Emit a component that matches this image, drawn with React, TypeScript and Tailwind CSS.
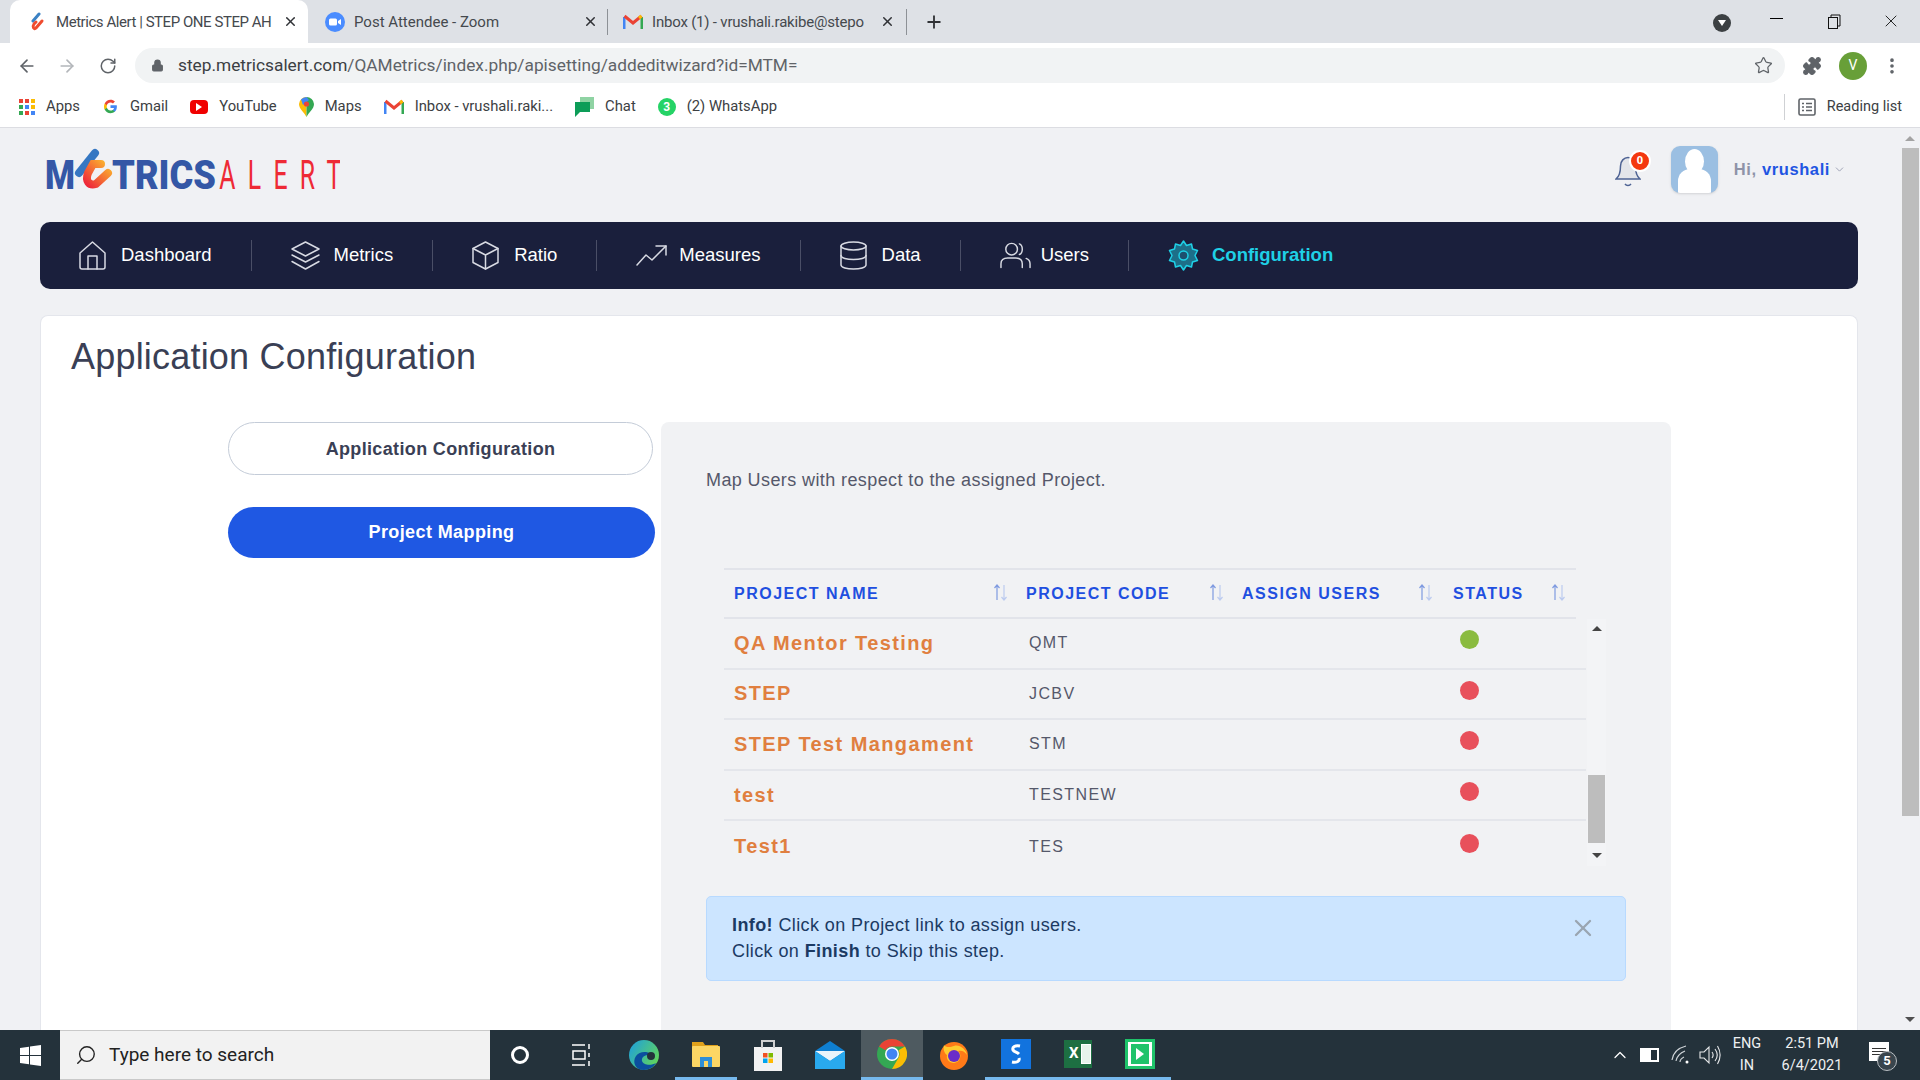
import type { ReactNode } from "react";
import {
    ArrowLeft,
    ArrowRight,
    ChevronDown,
    ChevronUp,
    Lock,
    MoreVertical,
    Plus,
    Puzzle,
    RotateCw,
    Search,
    Star,
    X,
} from "lucide-react";

const chromeFont = "font-['Roboto',sans-serif]";

function TabLogo() {
    return (
        <svg width="20" height="20" viewBox="0 0 20 20" fill="none" strokeLinecap="round">
            <path d="M6 9 L12 2" stroke="#3b82c4" strokeWidth="3" />
            <path d="M15 9 L9 16 C7 18 5 15 7 12 L9 10" stroke="#ef4b2f" strokeWidth="3" />
        </svg>
    );
}

function ZoomLogo() {
    return (
        <svg width="20" height="20" viewBox="0 0 20 20">
            <circle cx="10" cy="10" r="10" fill="#4a8cff" />
            <rect x="4" y="6.5" width="8" height="7" rx="1.5" fill="#fff" />
            <path d="M13 9 L16 7 V13 L13 11 Z" fill="#fff" />
        </svg>
    );
}

function GmailLogo() {
    return (
        <svg width="20" height="16" viewBox="0 0 20 16" fill="none">
            <path d="M1 15 V3" stroke="#4285f4" strokeWidth="3" />
            <path d="M19 15 V3" stroke="#34a853" strokeWidth="3" />
            <path d="M1.5 2 L10 9 L18.5 2" stroke="#ea4335" strokeWidth="3" />
            <path d="M18.5 2 L16 4" stroke="#fbbc04" strokeWidth="3" />
        </svg>
    );
}

function BrowserTab({
    icon,
    title,
    active,
    box,
    titleClass,
    divider,
}: {
    icon: ReactNode;
    title: string;
    active?: boolean;
    box: string;
    titleClass?: string;
    divider?: boolean;
}) {
    return (
        <div className={`relative flex h-[43px] items-center ${box} ${active ? "rounded-t-[10px] bg-white" : ""}`}>
            <div className="mr-[9px] flex w-[20px] shrink-0 justify-center">{icon}</div>
            <div className={`min-w-0 flex-1 whitespace-nowrap pt-[1px] text-[15px] text-[#45494e] ${titleClass ?? ""}`}>
                {title}
            </div>
            <X size={15} strokeWidth={2.4} className="ml-[8px] shrink-0 text-[#303236]" />
            {divider && <div className="absolute right-0 top-[9px] h-[26px] w-px bg-[#8d9196]" />}
        </div>
    );
}

function Bookmark({ icon, label }: { icon: ReactNode; label: string }) {
    return (
        <div className="mr-[22px] flex items-center gap-[11px] text-[14.8px] text-[#3c4043]">
            {icon}
            <span>{label}</span>
        </div>
    );
}

function BrowserChrome() {
    return (
        <div className={`shrink-0 ${chromeFont}`}>
            <div className="flex h-[43px] items-end bg-[#dee1e6] pl-[10px]">
                <BrowserTab
                    active
                    icon={<TabLogo />}
                    title="Metrics Alert | STEP ONE STEP AH"
                    box="w-[298px] pl-[17px] pr-[10px]"
                    titleClass="tracking-[-0.45px]"
                />
                <BrowserTab icon={<ZoomLogo />} title="Post Attendee - Zoom" box="w-[300px] pl-[17px] pr-[10px]" divider />
                <BrowserTab
                    icon={<GmailLogo />}
                    title="Inbox (1) - vrushali.rakibe@stepo"
                    box="w-[299px] pl-[15px] pr-[12px]"
                    titleClass="tracking-[-0.2px]"
                    divider
                />
                <Plus size={20} strokeWidth={2.2} className="mb-[11px] ml-[17px] text-[#303236]" />
                <div className="flex-1" />
                <div className="mb-[11px] mr-[39px] flex h-[18px] w-[18px] items-center justify-center rounded-full bg-[#3c4043]">
                    <div className="h-0 w-0 border-x-[4px] border-t-[6px] border-x-transparent border-t-white" />
                </div>
                <div className="mb-[24px] mr-[44px] h-px w-[13px] bg-black" />
                <svg width="15" height="15" viewBox="0 0 15 15" fill="none" stroke="#111" className="mb-[14px] mr-[39px]">
                    <rect x="1.5" y="3.5" width="9" height="11" />
                    <path d="M4 3 V1 H13 V12 H11" />
                </svg>
                <X size={20} strokeWidth={1} className="mb-[12px] mr-[19px] text-black" />
            </div>
            <div className="flex h-[43px] items-center bg-white pt-[2px]">
                <ArrowLeft size={20} strokeWidth={2} className="ml-[17px] text-[#5f6368]" />
                <ArrowRight size={20} strokeWidth={2} className="ml-[20px] text-[#b3b6ba]" />
                <RotateCw size={18} strokeWidth={2} className="ml-[22px] text-[#5f6368]" />
                <div className="ml-[18px] flex h-[35px] w-[1650px] items-center rounded-full bg-[#f1f3f4] pl-[16px] pr-[12px] text-[17.3px] text-[#3c4043]">
                    <Lock size={13} fill="#5f6368" strokeWidth={2} className="mr-[14px] text-[#5f6368]" />
                    <span>
                        step.metricsalert.com<span className="text-[#5f6368]">/QAMetrics/index.php/apisetting/addeditwizard?id=MTM=</span>
                    </span>
                    <Star size={19} strokeWidth={1.6} className="ml-auto text-[#5f6368]" />
                </div>
                <Puzzle size={20} fill="#5f6368" strokeWidth={1.5} className="ml-[17px] text-[#5f6368]" />
                <div className="ml-[17px] flex h-[28px] w-[28px] items-center justify-center rounded-full bg-[#689f38] text-[14px] text-white">
                    V
                </div>
                <MoreVertical size={20} strokeWidth={2.4} className="ml-[15px] text-[#5f6368]" />
            </div>
            <div className="flex h-[42px] items-center border-b border-[#dcdde2] bg-white pl-[19px] pr-[18px]">
                <Bookmark
                    label="Apps"
                    icon={
                        <div className="grid h-[16px] w-[16px] grid-cols-3 gap-[2px]">
                            {["#ea4335", "#ea4335", "#fbbc04", "#34a853", "#4285f4", "#fbbc04", "#34a853", "#ea4335", "#4285f4"].map((c, i) => (
                                <div key={i} style={{ backgroundColor: c }} />
                            ))}
                        </div>
                    }
                />
                <Bookmark
                    label="Gmail"
                    icon={
                        <svg width="17" height="17" viewBox="0 0 24 24">
                            <path d="M21 12.2c0-.7-.1-1.3-.2-1.9H12v3.7h5c-.2 1.2-.9 2.2-1.9 2.9v2.4h3c1.8-1.6 2.9-4.1 2.9-7.1z" fill="#4285f4" />
                            <path d="M12 21.5c2.5 0 4.7-.8 6.1-2.3l-3-2.4c-.8.6-1.9.9-3.1.9-2.4 0-4.4-1.6-5.1-3.8H3.8v2.4c1.5 3 4.6 5.2 8.2 5.2z" fill="#34a853" />
                            <path d="M6.9 13.9c-.4-1.2-.4-2.6 0-3.8V7.7H3.8c-1.3 2.6-1.3 5.7 0 8.6z" fill="#fbbc04" />
                            <path d="M12 6.3c1.3 0 2.6.5 3.5 1.4l2.7-2.7C16.6 3.5 14.4 2.6 12 2.6c-3.6 0-6.7 2.1-8.2 5.1l3.1 2.4C7.6 7.9 9.6 6.3 12 6.3z" fill="#ea4335" />
                        </svg>
                    }
                />
                <Bookmark
                    label="YouTube"
                    icon={
                        <div className="flex h-[14px] w-[18px] items-center justify-center rounded-[4px] bg-[#f00000]">
                            <div className="h-0 w-0 border-y-[4px] border-l-[6px] border-y-transparent border-l-white" />
                        </div>
                    }
                />
                <Bookmark
                    label="Maps"
                    icon={
                        <svg width="15" height="20" viewBox="0 0 15 20">
                            <path d="M7.5 20 C5 15 0 12 0 7 A7.5 7.5 0 0 1 7.5 0 V20Z" fill="#fbbc04" />
                            <path d="M7.5 0 A7.5 7.5 0 0 1 15 7 C15 12 10 15 7.5 20 Z" fill="#34a853" />
                            <path d="M2 2.5 A7.5 7.5 0 0 1 7.5 0 L10 3 L4 8 Z" fill="#4285f4" />
                            <circle cx="7.5" cy="7" r="2.6" fill="#ea4335" />
                        </svg>
                    }
                />
                <Bookmark label="Inbox - vrushali.raki..." icon={<GmailLogo />} />
                <Bookmark
                    label="Chat"
                    icon={
                        <svg width="19" height="20" viewBox="0 0 19 20">
                            <path d="M5 0 H19 V12 H15 V5 H5 Z" fill="#8fd3a3" />
                            <path d="M0 5 H15 V15 H5 L0 20 Z" fill="#0d9d58" />
                        </svg>
                    }
                />
                <Bookmark
                    label="(2) WhatsApp"
                    icon={
                        <div className="flex h-[18px] w-[18px] items-center justify-center rounded-full bg-[#25d366] text-[12px] font-bold text-white">
                            3
                        </div>
                    }
                />
                <div className="ml-auto flex h-[26px] items-center gap-[11px] border-l border-[#cfd1d4] pl-[13px] text-[14.5px] text-[#3c4043]">
                    <svg width="18" height="18" viewBox="0 0 18 18" fill="none" stroke="#5f6368" strokeWidth="1.6">
                        <rect x="1" y="1" width="16" height="16" rx="1.5" />
                        <path d="M4 5.5 H6 M8 5.5 H14 M4 9 H6 M8 9 H14 M4 12.5 H6 M8 12.5 H14" />
                    </svg>
                    <span>Reading list</span>
                </div>
            </div>
        </div>
    );
}

function MetricsLogo() {
    return (
        <svg width="300" height="60" viewBox="0 0 300 60">
            <defs>
                <linearGradient id="hook" x1="0" y1="1" x2="1" y2="0">
                    <stop offset="0" stopColor="#ee2a3a" />
                    <stop offset="1" stopColor="#fbb32e" />
                </linearGradient>
            </defs>
            <text x="5" y="49" fontFamily="Roboto, sans-serif" fontWeight="900" fontSize="40" fill="#3457a6" textLength="30" lengthAdjust="spacingAndGlyphs">
                M
            </text>
            <path d="M39 33 L55 13" stroke="#3577c2" strokeWidth="8" strokeLinecap="round" />
            <path d="M61 24 L53 24 L48 33 C45 41 49 46 56 44 L68 33" fill="none" stroke="url(#hook)" strokeWidth="8" strokeLinecap="round" />
            <text x="72" y="49" fontFamily="Roboto, sans-serif" fontWeight="900" fontSize="40" fill="#3457a6" textLength="104" lengthAdjust="spacingAndGlyphs">
                TRICS
            </text>
            <g transform="scale(0.62 1)">
                <text x="289" y="49" fontFamily="Roboto, sans-serif" fontWeight="400" fontSize="40" fill="#ee2a35" textLength="197" lengthAdjust="spacing">
                    ALERT
                </text>
            </g>
        </svg>
    );
}

function Header() {
    return (
        <div className="flex h-[94px] shrink-0 items-center pb-[11px] pr-[12px]">
            <MetricsLogo />
            <div className="ml-auto flex items-center">
                <div className="relative h-[40px] w-[40px]">
                    <svg width="26" height="34" viewBox="0 0 26 34" fill="none" className="absolute left-[5px] top-[5px]">
                        <path d="M1 24 H25 C21 21 20.5 16 20.5 11 C20.5 6 17 2.5 13 2.5 C9 2.5 5.5 6 5.5 11 C5.5 16 5 21 1 24 Z" fill="#e3e5ea" stroke="#4e6394" strokeWidth="1.5" />
                        <path d="M10 29 C11.5 31 14.5 31 16 29" stroke="#4e6394" strokeWidth="1.5" />
                    </svg>
                    <div className="absolute left-[19px] top-0 flex h-[22px] w-[22px] items-center justify-center rounded-full border-2 border-white bg-[#f4380f] text-[11px] font-bold text-white">
                        0
                    </div>
                </div>
                <div className="relative ml-[21px] h-[47px] w-[47px] overflow-hidden rounded-[9px] bg-[#9bbfe2] shadow-sm">
                    <div className="absolute left-[14px] top-[3px] h-[25px] w-[19px] rounded-[50%] bg-white" />
                    <div className="absolute left-[7px] top-[23px] h-[24px] w-[33px] rounded-t-[12px] bg-white" />
                </div>
                <div className="ml-[16px] font-['Liberation_Sans',sans-serif] text-[16.5px] font-bold tracking-[0.6px] text-[#8e93a8]">
                    Hi, <span className="text-[#1f55e2]">vrushali</span>
                </div>
                <ChevronDown size={13} strokeWidth={1.5} className="ml-[3px] text-[#8e93a8]" />
            </div>
        </div>
    );
}

function NavIcon({ name }: { name: string }) {
    const props = {
        fill: "none",
        stroke: name === "Configuration" ? "#1fd0e6" : "#d8dae3",
        strokeWidth: 1.5,
        strokeLinecap: "round" as const,
        strokeLinejoin: "round" as const,
    };
    if (name === "Dashboard")
        return (
            <svg width="27" height="29" viewBox="0 0 27 29" {...props}>
                <path d="M1 12 L13.5 1 L26 12 V26 A2 2 0 0 1 24 28 H3 A2 2 0 0 1 1 26 Z" />
                <path d="M9 28 V15 H18 V28" />
            </svg>
        );
    if (name === "Metrics")
        return (
            <svg width="29" height="29" viewBox="0 0 29 29" {...props}>
                <path d="M14.5 1 L28 8 L14.5 15 L1 8 Z" />
                <path d="M1 14 L14.5 21 L28 14" />
                <path d="M1 20.5 L14.5 28 L28 20.5" />
            </svg>
        );
    if (name === "Ratio")
        return (
            <svg width="27" height="29" viewBox="0 0 27 29" {...props}>
                <path d="M13.5 1 L26 7.5 V21.5 L13.5 28 L1 21.5 V7.5 Z" />
                <path d="M1 7.5 L13.5 14 L26 7.5 M13.5 14 V28" />
            </svg>
        );
    if (name === "Measures")
        return (
            <svg width="31" height="21" viewBox="0 0 31 21" {...props}>
                <path d="M1 20 L10 10 L16 15 L30 1" />
                <path d="M20 1 H30 V10" />
            </svg>
        );
    if (name === "Data")
        return (
            <svg width="27" height="29" viewBox="0 0 27 29" {...props}>
                <ellipse cx="13.5" cy="5" rx="12.5" ry="4" />
                <path d="M1 5 V24 C1 26.5 7 28 13.5 28 C20 28 26 26.5 26 24 V5" />
                <path d="M1 14.5 C1 17 7 18.5 13.5 18.5 C20 18.5 26 17 26 14.5" />
            </svg>
        );
    if (name === "Users")
        return (
            <svg width="31" height="27" viewBox="0 0 32 27" {...props}>
                <circle cx="12" cy="7" r="6" />
                <path d="M20 1.5 C24 3 24 11 20 12.5" />
                <path d="M1 26 V22 C1 18 4 16 8 16 H16 C20 16 23 18 23 22 V26" />
                <path d="M27 16.5 C29.5 17.5 31 19.5 31 22 V26" />
            </svg>
        );
    return (
        <svg width="31" height="31" viewBox="0 0 31 31" {...props}>
            <path
                d="M15.5 1 L18.5 5.5 L23.5 4 L24.5 9 L29.5 10.5 L27 15.5 L29.5 20.5 L24.5 22 L23.5 27 L18.5 25.5 L15.5 30 L12.5 25.5 L7.5 27 L6.5 22 L1.5 20.5 L4 15.5 L1.5 10.5 L6.5 9 L7.5 4 L12.5 5.5 Z"
                fill="#1d6f88"
            />
            <circle cx="15.5" cy="15.5" r="4.5" fill="#1d4f6e" />
        </svg>
    );
}

const navItems = [
    { name: "Dashboard", gap: "gap-[15px]" },
    { name: "Metrics", gap: "gap-[14px]" },
    { name: "Ratio", gap: "gap-[15px]" },
    { name: "Measures", gap: "gap-[12px]" },
    { name: "Data", gap: "gap-[15px]" },
    { name: "Users", gap: "gap-[10px]" },
    { name: "Configuration", gap: "gap-[13px]" },
];

function NavBar() {
    return (
        <div className="flex h-[67px] shrink-0 items-center rounded-[10px] bg-[#1a1f3c] pb-[1px] font-['Liberation_Sans',sans-serif]">
            {navItems.map(({ name, gap }, i) => {
                const active = name === "Configuration";
                return (
                    <div
                        key={name}
                        className={`flex h-[31px] items-center px-[39px] text-[18.5px] ${gap} ${
                            i < navItems.length - 1 ? "border-r border-[#4a4e66]" : ""
                        } ${active ? "font-bold text-[#1fd0e6]" : "text-white"}`}
                    >
                        <NavIcon name={name} />
                        <span>{name}</span>
                    </div>
                );
            })}
        </div>
    );
}

function SortIcon() {
    return (
        <svg width="15" height="17" viewBox="0 0 15 17" fill="none" strokeWidth="1.2" className="mb-[2px]">
            <path d="M4 16 V1 M1.5 4 L4 1 L6.5 4" stroke="#7f9be0" />
            <path d="M11 1 V16 M8.5 13 L11 16 L13.5 13" stroke="#bccbef" />
        </svg>
    );
}

const projects = [
    { name: "QA Mentor Testing", code: "QMT", on: true },
    { name: "STEP", code: "JCBV", on: false },
    { name: "STEP Test Mangament", code: "STM", on: false },
    { name: "test", code: "TESTNEW", on: false },
    { name: "Test1", code: "TES", on: false },
];

function ProjectTable() {
    return (
        <div className="ml-[18px] mt-[76px] w-[882px]">
            <div className="flex h-[51px] w-[852px] items-center border-y-2 border-[#e2e4ea] text-[16px] font-bold tracking-[1.5px] text-[#1f4fe0]">
                <div className="flex w-[293px] items-center justify-between pl-[10px] pr-[9px]">
                    PROJECT NAME <SortIcon />
                </div>
                <div className="flex w-[216px] items-center justify-between pl-[9px] pr-[9px]">
                    PROJECT CODE <SortIcon />
                </div>
                <div className="flex w-[211px] items-center justify-between pl-[9px] pr-[11px]">
                    ASSIGN USERS <SortIcon />
                </div>
                <div className="flex w-[132px] items-center justify-between pl-[9px] pr-[10px]">
                    STATUS <SortIcon />
                </div>
            </div>
            <div className="flex">
                <div className="w-[862px]">
                    {projects.map((p, i) => (
                        <div
                            key={p.name}
                            className={`flex h-[50.6px] items-center ${i < projects.length - 1 ? "border-b-2 border-[#e4e6eb]" : ""}`}
                        >
                            <div className="w-[305px] pb-[1px] pl-[10px] text-[20px] font-bold tracking-[1.4px] text-[#e07f3f]">{p.name}</div>
                            <div className="w-[431px] text-[16px] tracking-[1.4px] text-[#55586a]">{p.code}</div>
                            <div
                                className={`-mt-[7px] h-[19px] w-[19px] rounded-full ${p.on ? "bg-[#8abb3f]" : "bg-[#e8505b]"}`}
                            />
                        </div>
                    ))}
                </div>
                <div className="ml-[1px] flex h-[247px] w-[19px] flex-col items-center bg-[#f3f4f6] pt-[7px]">
                    <div className="h-0 w-0 border-x-[5px] border-b-[5px] border-x-transparent border-b-[#444]" />
                    <div className="mt-[144px] h-[68px] w-[17px] bg-[#bdbdbd]" />
                    <div className="mt-[10px] h-0 w-0 border-x-[5px] border-t-[5px] border-x-transparent border-t-[#444]" />
                </div>
            </div>
        </div>
    );
}

function ConfigCard() {
    return (
        <div className="mt-[26px] min-h-0 flex-1 rounded-t-[8px] border-x border-t border-[#e4e6ec] bg-white font-['Liberation_Sans',sans-serif]">
            <h1 className="pl-[30px] pt-[19px] text-[36px] leading-[44px] tracking-[0.2px] text-[#3a3f55]">
                Application Configuration
            </h1>
            <div className="mt-[43px] flex pl-[187px]">
                <div className="w-[427px]">
                    <div className="flex h-[53px] w-[425px] items-center justify-center rounded-full border border-[#c4ccd8] pt-[1px] text-[18px] font-bold tracking-[0.35px] text-[#3a3f55]">
                        Application Configuration
                    </div>
                    <div className="mt-[32px] flex h-[51px] w-[427px] items-center justify-center rounded-full bg-[#1f58e3] text-[18px] font-bold tracking-[0.4px] text-white">
                        Project Mapping
                    </div>
                </div>
                <div className="ml-[6px] h-[608px] w-[1010px] rounded-t-[8px] bg-[#f1f2f4] pl-[45px]">
                    <p className="pt-[46px] text-[18px] leading-[24px] tracking-[0.4px] text-[#55586a]">
                        Map Users with respect to the assigned Project.
                    </p>
                    <ProjectTable />
                    <div className="relative mt-[24px] h-[85px] w-[920px] rounded-[5px] border border-[#b8daff] bg-[#cce5ff] pl-[25px] pt-[15px] text-[18px] leading-[26px] tracking-[0.4px] text-[#1b3a63]">
                        <div>
                            <b>Info!</b> Click on Project link to assign users.
                        </div>
                        <div>
                            Click on <b>Finish</b> to Skip this step.
                        </div>
                        <X size={28} strokeWidth={2} className="absolute right-[28px] top-[17px] text-[#9aa5b1]" />
                    </div>
                </div>
            </div>
        </div>
    );
}

function TaskbarSlot({ children, on, active }: { children: ReactNode; on?: boolean; active?: boolean }) {
    return (
        <div
            className={`flex h-[50px] w-[62px] shrink-0 items-center justify-center ${
                active ? "bg-[#4e5a60]" : ""
            } ${on ? "border-b-[3px] border-[#76b9ed]" : ""}`}
        >
            {children}
        </div>
    );
}

function Taskbar() {
    return (
        <div className={`flex h-[50px] shrink-0 items-center bg-[#24323b] text-white ${chromeFont}`}>
            <div className="flex w-[60px] justify-center">
                <svg width="21" height="21" viewBox="0 0 21 21" fill="#fff">
                    <path d="M0 3 L9 1.7 V10 H0 Z M10 1.5 L21 0 V10 H10 Z M0 11 H9 V19.3 L0 18 Z M10 11 H21 V21 L10 19.5 Z" />
                </svg>
            </div>
            <div className="flex h-[50px] w-[430px] items-center border-y border-[#c9c9c9] bg-[#f2f2f2] pl-[15px] text-[19px] text-[#222]">
                <Search size={22} strokeWidth={1.5} className="mr-[12px] -scale-x-100 text-[#222]" />
                Type here to search
            </div>
            <div className="flex w-[60px] justify-center">
                <div className="h-[18px] w-[18px] rounded-full border-[3px] border-white" />
            </div>
            <div className="flex w-[63px] justify-center">
                <svg width="20" height="22" viewBox="0 0 20 22" fill="none" stroke="#fff" strokeWidth="1.5">
                    <path d="M0 1 H13 M0 21 H13 M17 0 V5 M17 9 V13 M17 17 V22" />
                    <rect x="1" y="7" width="12" height="8" />
                </svg>
            </div>
            <TaskbarSlot>
                <svg width="30" height="30" viewBox="0 0 30 30">
                    <defs>
                        <linearGradient id="edge" x1="0" y1="0" x2="1" y2="0.6">
                            <stop offset="0" stopColor="#1b9de2" />
                            <stop offset="1" stopColor="#5fd35f" />
                        </linearGradient>
                    </defs>
                    <circle cx="15" cy="15" r="15" fill="url(#edge)" />
                    <path d="M15 30 C6 30 3 22 7 16 C11 10 22 11 24 17 C18 13 12 16 13 21 C14 25 22 26 27 23 C25 27 20 30 15 30Z" fill="#0b4f9e" />
                    <circle cx="22" cy="16" r="4" fill="#24323b" />
                </svg>
            </TaskbarSlot>
            <TaskbarSlot on>
                <svg width="28" height="28" viewBox="0 0 28 28">
                    <path d="M0 2 H11 L13 5 H26 V8 H0 Z" fill="#e0a11b" />
                    <rect y="6" width="28" height="21" rx="1" fill="#fcd664" />
                    <path d="M8 27 V17 H20 V27 H16 V21 H12 V27 Z" fill="#2e8fd8" />
                </svg>
            </TaskbarSlot>
            <TaskbarSlot>
                <svg width="28" height="32" viewBox="0 0 28 32">
                    <rect y="8" width="28" height="24" fill="#f2f2f2" />
                    <path d="M8 9 V2 H20 V9" fill="none" stroke="#d0d0d0" strokeWidth="2" />
                    <rect x="9" y="14" width="4.5" height="4.5" fill="#f25022" />
                    <rect x="14.5" y="14" width="4.5" height="4.5" fill="#7fba00" />
                    <rect x="9" y="19.5" width="4.5" height="4.5" fill="#00a4ef" />
                    <rect x="14.5" y="19.5" width="4.5" height="4.5" fill="#ffb900" />
                </svg>
            </TaskbarSlot>
            <TaskbarSlot>
                <svg width="30" height="28" viewBox="0 0 30 28">
                    <path d="M0 10 L15 0 L30 10 V28 H0 Z" fill="#0f7fd1" />
                    <path d="M0 10 H30 L15 20 Z" fill="#e9f4fb" />
                    <path d="M0 10 L15 20 L30 10 V28 H0Z" fill="#29a9ee" />
                </svg>
            </TaskbarSlot>
            <TaskbarSlot on active>
                <svg width="30" height="30" viewBox="0 0 30 30">
                    <circle cx="15" cy="15" r="15" fill="#34a853" />
                    <path d="M15 0 A15 15 0 0 1 28 7.5 H15 A7.5 7.5 0 0 0 8.5 11.2 L2 7.5 A15 15 0 0 1 15 0 Z" fill="#ea4335" />
                    <path d="M28 7.5 A15 15 0 0 1 15 30 L21.5 18.7 A7.5 7.5 0 0 0 21.5 11.3 Z" fill="#fbbc04" />
                    <circle cx="15" cy="15" r="7" fill="#fff" />
                    <circle cx="15" cy="15" r="5.5" fill="#4285f4" />
                </svg>
            </TaskbarSlot>
            <TaskbarSlot>
                <svg width="30" height="30" viewBox="0 0 30 30">
                    <circle cx="15" cy="16" r="14" fill="#ff7a18" />
                    <path d="M5 5 C7 8 12 7 15 6 C20 4 27 9 28 15 C26 11 22 10 19 11 C23 14 22 22 15 23 C10 23 7 19 8 15 C5 13 4 9 5 5Z" fill="#ffcb2f" />
                    <circle cx="15" cy="16" r="6" fill="#6a2cc9" />
                </svg>
            </TaskbarSlot>
            <TaskbarSlot on>
                <svg width="30" height="30" viewBox="0 0 30 30">
                    <rect width="30" height="30" fill="#1273de" />
                    <path d="M19 7 C14 6 11 8 12 11 C13 13 16 13 18 15 M11 23 C16 24 19 22 18 19" fill="none" stroke="#fff" strokeWidth="3" />
                </svg>
            </TaskbarSlot>
            <TaskbarSlot on>
                <div className="flex h-[28px] w-[28px] items-center bg-[#1d6f42] pl-[5px] text-[15px] font-bold leading-none text-white">
                    X<span className="ml-[2px] h-[20px] w-[10px] border border-white bg-[#e8f3ec]" />
                </div>
            </TaskbarSlot>
            <TaskbarSlot on>
                <div className="flex h-[30px] w-[30px] items-center justify-center border-[3px] border-[#1fc36a] bg-[#fff]">
                    <div className="flex h-[20px] w-[18px] items-center justify-center bg-[#1fc36a]">
                        <div className="h-0 w-0 border-y-[6px] border-l-[8px] border-y-transparent border-l-white" />
                    </div>
                </div>
            </TaskbarSlot>
            <div className="ml-auto flex items-center">
                <ChevronUp size={20} strokeWidth={1.5} />
                <div className="ml-[10px] flex h-[14px] w-[19px] items-center border-2 border-white bg-transparent">
                    <div className="h-full w-[9px] bg-white" />
                </div>
                <svg width="20" height="20" viewBox="0 0 20 20" fill="none" stroke="#cfd4d8" strokeWidth="1.2" className="ml-[12px]">
                    <path d="M1 15 C2 8 7 3 15 1 M5 16 C6 11 9 8 14 6 M9 17 C9 15 11 13 13 12" />
                    <circle cx="16" cy="17" r="1.5" fill="#fff" stroke="none" />
                </svg>
                <svg width="22" height="22" viewBox="0 0 22 22" fill="none" stroke="#e6e8ea" strokeWidth="1.1" className="ml-[8px]">
                    <path d="M1 8 H5 L10 3 V19 L5 14 H1 Z" />
                    <path d="M13 8 C14.5 10 14.5 12 13 14 M16 5 C19 9 19 13 16 17 M18.5 2 C22 8 22 14 18.5 20" />
                </svg>
                <div className="ml-[5px] flex w-[42px] flex-col items-center text-[14.5px] leading-[22px] text-[#eef0f1]">
                    <span>ENG</span>
                    <span>IN</span>
                </div>
                <div className="ml-[8px] flex w-[72px] flex-col items-center text-[14.5px] leading-[22px] text-[#eef0f1]">
                    <span>2:51 PM</span>
                    <span>6/4/2021</span>
                </div>
                <div className="relative ml-[21px] mr-[31px] h-[26px] w-[20px]">
                    <div className="flex h-[19px] w-[20px] flex-col justify-center gap-[2px] bg-white px-[3px]">
                        <div className="h-px bg-[#333]" />
                        <div className="h-px bg-[#333]" />
                        <div className="h-px bg-[#333]" />
                    </div>
                    <div className="absolute -bottom-[3px] left-[8px] flex h-[20px] w-[20px] items-center justify-center rounded-full border border-[#b9bec2] bg-[#39454d] text-[13px] font-bold">
                        5
                    </div>
                </div>
            </div>
        </div>
    );
}

function PageScrollbar() {
    return (
        <div className="flex w-[20px] shrink-0 flex-col items-center bg-[#f0f1f4] pt-[8px]">
            <div className="h-0 w-0 border-x-[5px] border-b-[5px] border-x-transparent border-b-[#a3a3a3]" />
            <div className="mt-[7px] h-[668px] w-[17px] bg-[#bdbdbd]" />
            <div className="mb-[8px] mt-auto h-0 w-0 border-x-[5px] border-t-[5px] border-x-transparent border-t-[#505050]" />
        </div>
    );
}

export default function App() {
    return (
        <div className="flex h-screen w-full flex-col overflow-hidden bg-[#f0f1f4]">
            <BrowserChrome />
            <div className="flex min-h-0 flex-1">
                <div className="flex min-w-0 flex-1 flex-col overflow-hidden pl-[40px] pr-[42px]">
                    <Header />
                    <NavBar />
                    <ConfigCard />
                </div>
                <PageScrollbar />
            </div>
            <Taskbar />
        </div>
    );
}
